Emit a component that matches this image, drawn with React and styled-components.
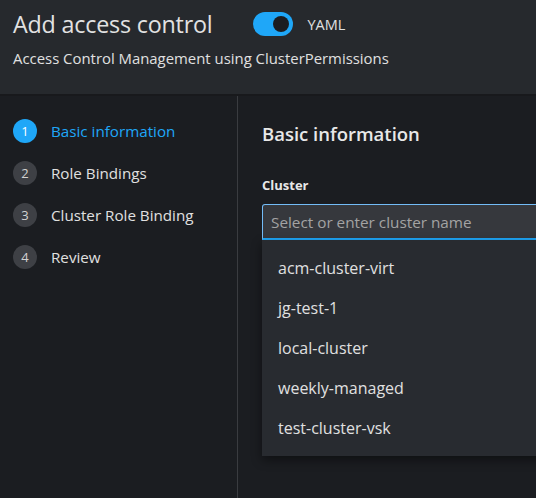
import React from 'react';
import styled, { createGlobalStyle } from 'styled-components';

const GlobalStyle = createGlobalStyle`
  html, body {
    margin: 0;
    padding: 0;
    background: #1b1d21;
    font-family: 'Open Sans', 'Noto Sans', sans-serif;
    color: #e0e0e0;
  }
`;

const Page = styled.div`
  width: 536px;
  height: 498px;
  display: flex;
  flex-direction: column;
  overflow: hidden;
`;

const Header = styled.header`
  background: #26292d;
  height: 96px;
  padding: 11px 13px 0;
  box-sizing: border-box;
  border-bottom: 2px solid #18191c;
  flex-shrink: 0;
`;

const TitleRow = styled.div`
  display: flex;
  align-items: center;
  height: 26px;
`;

const Title = styled.h1`
  margin: 0;
  font-size: 23.3px;
  font-weight: 500;
  color: #e2e2e2;
  letter-spacing: -0.2px;
`;

const Toggle = styled.span`
  width: 40px;
  height: 24px;
  border-radius: 12px;
  background: #1fa7f8;
  margin-left: 41px;
  position: relative;
  flex-shrink: 0;

  &::after {
    content: '';
    position: absolute;
    right: 4px;
    top: 4px;
    width: 16px;
    height: 16px;
    border-radius: 50%;
    background: #1b1d21;
  }
`;

const ToggleLabel = styled.span`
  margin-left: 14px;
  font-size: 14.5px;
  color: #e0e0e0;
`;

const Subtitle = styled.p`
  margin: 11px 0 0;
  font-size: 14.9px;
  color: #e0e0e0;
`;

const Body = styled.div`
  flex: 1;
  display: flex;
  min-height: 0;
`;

const Sidebar = styled.nav`
  width: 238px;
  border-right: 1px solid #3a3c40;
  padding: 23px 13px 0;
  box-sizing: border-box;
  display: flex;
  flex-direction: column;
  gap: 18px;
  flex-shrink: 0;
`;

const Step = styled.div`
  display: flex;
  align-items: center;
  gap: 14px;
  height: 24px;
  font-size: 15.2px;
  color: ${p => (p.$active ? '#1fa7f8' : '#e0e0e0')};
`;

const StepNum = styled.span`
  width: 24px;
  height: 24px;
  border-radius: 50%;
  background: ${p => (p.$active ? '#1fa7f8' : '#3e4045')};
  color: ${p => (p.$active ? '#ffffff' : '#d2d2d2')};
  font-size: 13px;
  display: flex;
  align-items: center;
  justify-content: center;
  flex-shrink: 0;
`;

const Main = styled.main`
  flex: 1;
  padding: 25px 0 0 24px;
  min-width: 0;
`;

const SectionTitle = styled.h2`
  margin: 0;
  font-size: 18.5px;
  font-weight: 600;
  color: #e8e8e8;
`;

const FieldLabel = styled.label`
  display: block;
  margin-top: 30px;
  font-size: 13px;
  font-weight: 700;
  color: #e8e8e8;
`;

const Combo = styled.div`
  position: relative;
  margin-top: 10px;
  width: 310px;
`;

const Input = styled.input`
  display: block;
  width: 100%;
  height: 36px;
  box-sizing: border-box;
  background: #36383d;
  border: 1px solid #73bcf7;
  border-bottom: 2px solid #1fa7f8;
  border-radius: 3px 3px 0 0;
  padding: 0 8px;
  font-family: inherit;
  font-size: 15.3px;
  color: #e0e0e0;
  outline: none;

  &::placeholder {
    color: #a3a3a3;
  }
`;

const Menu = styled.ul`
  position: absolute;
  left: 0;
  right: 0;
  top: 36px;
  margin: 0;
  padding: 8px 0;
  list-style: none;
  background: #282b30;
  box-shadow: 0 4px 10px rgba(0, 0, 0, 0.45);
`;

const MenuItem = styled.li`
  height: 40px;
  display: flex;
  align-items: center;
  padding-left: 16px;
  font-size: 16px;
  color: #e0e0e0;
`;

const steps = ['Basic information', 'Role Bindings', 'Cluster Role Binding', 'Review'];
const clusters = ['acm-cluster-virt', 'jg-test-1', 'local-cluster', 'weekly-managed', 'test-cluster-vsk'];

export default function App() {
  return (
    <Page>
      <GlobalStyle />
      <Header>
        <TitleRow>
          <Title>Add access control</Title>
          <Toggle />
          <ToggleLabel>YAML</ToggleLabel>
        </TitleRow>
        <Subtitle>Access Control Management using ClusterPermissions</Subtitle>
      </Header>
      <Body>
        <Sidebar>
          {steps.map((s, i) => (
            <Step key={s} $active={i === 0}>
              <StepNum $active={i === 0}>{i + 1}</StepNum>
              {s}
            </Step>
          ))}
        </Sidebar>
        <Main>
          <SectionTitle>Basic information</SectionTitle>
          <FieldLabel>Cluster</FieldLabel>
          <Combo>
            <Input placeholder="Select or enter cluster name" />
            <Menu>
              {clusters.map(c => (
                <MenuItem key={c}>{c}</MenuItem>
              ))}
            </Menu>
          </Combo>
        </Main>
      </Body>
    </Page>
  );
}
